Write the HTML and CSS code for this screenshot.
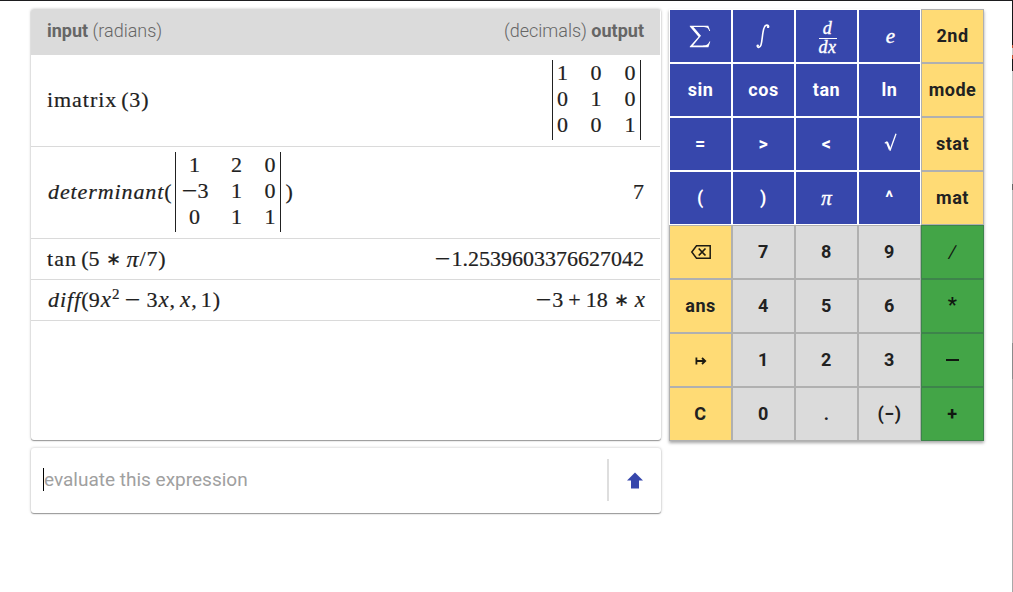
FILE: index.html
```
<!DOCTYPE html>
<html lang="en">
<head>
<meta charset="utf-8">
<title>Calculator</title>
<link rel="stylesheet" href="styles.css">
</head>
<body>
<main class="app">
  <div class="left">
    <section class="card history">
      <header class="head"><span><b>input</b> (radians)</span><span>(decimals) <b>output</b></span></header>
      <div class="row tall">
        <div class="math"><span class="imat">imatrix</span><span class="gap-s arg">(3)</span></div>
        <div class="matrix ident"><span>1</span><span>0</span><span>0</span><span>0</span><span>1</span><span>0</span><span>0</span><span>0</span><span>1</span></div>
      </div>
      <div class="row tall">
        <div class="math"><i class="det">determinant</i><span>(</span>
          <div class="matrix wide"><span>1</span><span>2</span><span>0</span><span class="neg-cell"><span class="minus">−</span>3</span><span>1</span><span>0</span><span>0</span><span>1</span><span>1</span></div><span class="close">)</span></div>
        <div class="math">7</div>
      </div>
      <div class="row">
        <div class="math"><span class="tan">tan</span><span class="gap-s">(5</span><span class="op star">∗</span><i class="pi wide-pi">π</i><span class="quot">/7)</span></div>
        <div class="math"><span class="minus lead">−</span>1.2539603376627042</div>
      </div>
      <div class="row">
        <div class="math"><i class="diff">diff</i><span>(9</span><i class="x">x</i><sup>2</sup><span class="op minus">−</span><span>3</span><i class="x">x</i><span class="comma">,</span><i class="x">x</i><span class="comma">,</span><span class="arg">1)</span></div>
        <div class="math"><span class="minus">−</span>3<span class="op plus">+</span>18<span class="op star">∗</span><i class="x last">x</i></div>
      </div>
    </section>
    <section class="card entry">
      <span class="caret"></span><span class="hint">evaluate this expression</span>
      <span class="divider"></span>
      <svg class="arrow" width="16" height="17" viewBox="0 0 16 17"><path d="M8 0.5 16 8.5H12V16.5H4V8.5H0Z" fill="#3747ac"/></svg>
    </section>
  </div>
  <section class="keys">
    <div class="key blue"><svg class="sigma" width="22" height="23" viewBox="0 0 22 23"><path d="M.8.7H19.3L21.2 6H20.3C19.2 2.800 17.800 2 13.500 2H4.500L12 10.700 4 20.400H13.500C17.800 20.400 19.300 19.400 20.400 16.500H21.300L19.400 22.300H.8V21.500L9.500 11.800.8 1.600Z" fill="#fff"/></svg></div>
    <div class="key blue"><svg class="integral" width="14" height="25" viewBox="0 0 14 25"><path d="M1.300 21.700c0 2.300 2.700 2.300 3.700-.7C6.400 16.500 6.300 8 8.200 3.500 9.300.6 12.500.4 12.600 2.800" fill="none" stroke="#fff" stroke-width="1.600"/><circle cx="1.800" cy="21.600" r="1.200" fill="#fff"/><circle cx="12.100" cy="2.900" r="1.200" fill="#fff"/></svg></div>
    <div class="key blue serif"><span class="frac"><i>d</i><i>dx</i></span></div>
    <div class="key blue serif"><i class="e">e</i></div>
    <div class="key yellow">2nd</div>
    <div class="key blue">sin</div><div class="key blue">cos</div><div class="key blue">tan</div><div class="key blue">ln</div><div class="key yellow">mode</div>
    <div class="key blue sym">=</div><div class="key blue sym">&gt;</div><div class="key blue sym">&lt;</div>
    <div class="key blue"><svg class="root" width="13" height="19" viewBox="0 0 13 19" fill="none" stroke="#fff"><path d="M.8 10.200 3 8.800" stroke-width="1.200"/><path d="M2.800 8.800 5.900 16.500" stroke-width="2.200"/><path d="M5.900 17.800 12 .8" stroke-width="1.300"/></svg></div>
    <div class="key yellow">stat</div>
    <div class="key blue">(</div><div class="key blue">)</div><div class="key blue serif"><i class="pi">π</i></div><div class="key blue caret-key">^</div><div class="key yellow">mat</div>
    <div class="key yellow"><svg class="erase" width="22" height="16" viewBox="0 0 22 16" fill="none" stroke="#1d1b12"><path d="M6.500 1.700H20.200V14.300H6.500L1.800 8Z" stroke-width="1.500"/><path d="M8.700 4.500 15.500 11.500M15.500 4.500 8.700 11.500" stroke-width="1.700"/></svg></div>
    <div class="key grey">7</div><div class="key grey">8</div><div class="key grey">9</div>
    <div class="key green"><span class="slash">/</span></div>
    <div class="key yellow">ans</div><div class="key grey">4</div><div class="key grey">5</div><div class="key grey">6</div><div class="key green star-key">*</div>
    <div class="key yellow"><svg class="maps" width="12" height="10" viewBox="0 0 12 10" fill="none" stroke="#1d1b12" stroke-width="1.800"><path d="M1.400 1.500V8.500M1.400 5H10M7 2 10.200 5 7 8"/></svg></div>
    <div class="key grey">1</div><div class="key grey">2</div><div class="key grey">3</div><div class="key green"><span class="dash"></span></div>
    <div class="key yellow">C</div><div class="key grey">0</div><div class="key grey">.</div><div class="key grey neg">(−)</div><div class="key green">+</div>
  </section>
  <span class="edge"></span>
</main>
</body>
</html>
```
FILE: styles.css
```
* { box-sizing: border-box; }
body { margin: 0; background: #fff; font-family: Roboto, sans-serif; color: #212121; }
.app { height: 592px; overflow: hidden; border-top: 1px solid #1d1d1f; display: flex; align-items: flex-start; gap: 8px; padding: 8px 0 0 31px; }
.left { width: 630px; flex: none; display: flex; flex-direction: column; gap: 8px; }
.card { background: #fff; border-radius: 3px; box-shadow: 0 1px 1px rgba(0,0,0,.35), 0 0 3px rgba(0,0,0,.25); overflow: hidden; }
.history { height: 431px; padding-right: 1px; }
.head { height: 46px; background: #dbdbdb; color: #666; display: flex; justify-content: space-between; padding: 10px 16px 0; font-size: 18px; font-weight: 300; line-height: 24px; }
.head b { font-weight: 700; }
.row { height: 41px; border-bottom: 1px solid #dadada; display: flex; justify-content: space-between; align-items: center; padding: 0 16px; }
.tall { height: 92px; padding-bottom: 2px; }
.math, .matrix, .serif { font-family: "Liberation Serif", serif; font-size: 22px; line-height: 26px; }
.math { display: flex; align-items: center; white-space: pre; -webkit-text-stroke: .2px #212121; }
.imat { letter-spacing: .95px; }
.arg { letter-spacing: .8px; }
.det { letter-spacing: .9px; margin-left: 1px; }
.gap-s { margin-left: 4px; }
.matrix { height: 80px; display: grid; grid-template-rows: repeat(3, 26px); align-content: center; justify-items: center; padding-bottom: 2px; border-left: 1.500px solid #212121; border-right: 1.500px solid #212121; -webkit-text-stroke: .2px #212121; }
.ident { grid-template-columns: 19px 48px 20px; width: 89px; margin-right: 3px; }
.wide { grid-template-columns: 38px 46px 21px; width: 106px; margin-left: 3px; }
.neg-cell { display: flex; }
.close { margin-left: 5px; }
.op { margin: 0 5px; }
.star { font-size: 18px; margin: 0 6px; }
.wide-pi { font-size: 24px; }
.quot { letter-spacing: .8px; margin-left: 1px; }
.tan { letter-spacing: 1.100px; }
.diff { letter-spacing: 1px; margin-left: 1px; }
.x { font-size: 23px; margin: 0 1px; }
.last { margin: 0 -1px 0 0; }
.comma { margin-right: 4px; }
sup { font-size: 15px; line-height: 15px; vertical-align: 0; margin-bottom: 12px; }
.minus { width: 17px; text-align: center; transform: scaleX(1.250); }
.lead { margin-right: 1px; }
.entry { height: 65px; display: flex; align-items: center; padding: 0 18px 2px 12px; font-size: 19px; }
.caret { width: 1px; height: 23px; background: #000; }
.hint { color: #a0a0a0; flex: 1; }
.divider { width: 2px; height: 42px; background: #dedede; margin-right: 18px; }
.arrow { margin-top: 1px; }
.keys { flex: none; display: grid; grid-template-columns: repeat(5, 63px); grid-auto-rows: 54px; box-shadow: 0 2px 3px rgba(0,0,0,.35); }
.key { display: flex; align-items: center; justify-content: center; border: 1px solid #b0b0b0; font-size: 18px; font-weight: 700; letter-spacing: .5px; padding-bottom: 2px; }
.blue { background: #3747ac; border-color: #fff; color: #fff; }
.yellow { background: #ffdb75; }
.grey { background: #dbdbdb; }
.green { background: #43a547; border-color: #3d844b; color: #101810; }
.key.serif { font-weight: 400; font-size: 21px; letter-spacing: 0; padding: 0; -webkit-text-stroke: .4px #fff; }
.frac { display: grid; font-size: 18px; line-height: 17px; text-align: center; letter-spacing: .5px; padding: 3px 0 0 2px; }
.frac i:first-child { border-bottom: 1px solid #fff; line-height: 19px; }
.e { margin-left: 2px; }
.sigma { margin: 3px 1px 0 0; }
.integral { margin: 3px 2px 0 0; }
.root { margin: 0 0 2px 2px; }
.erase { margin: 1px 0 0; }
.maps { margin: 3px 0 0; }
.sym { font-size: 18px; }
.caret-key { font-size: 18px; }
.star-key { font-size: 20px; }
.slash { font-weight: 400; transform: skewX(-10deg); }
.dash { width: 13px; height: 2px; background: #101810; margin-top: 1px; }
.edge { flex: none; width: 1px; height: 591px; margin: -8px 0 0 20px; background: linear-gradient(#161618 44px, #c9512f 44px 47px, #ccc 47px 54px, #c9512f 54px 58px, #161618 58px 70px, #c8c8c8 70px 183px, #666 183px 189px, #bbb 189px 342px, #8b8b8b 342px 378px, #a8a8a8 378px); }
```
